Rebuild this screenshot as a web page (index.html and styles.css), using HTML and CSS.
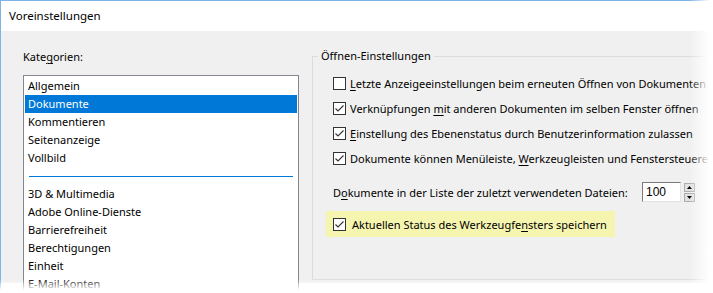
FILE: index.html
```html
<!DOCTYPE html>
<html lang="de">
<head>
    <meta charset="UTF-8">
    <title>Voreinstellungen</title>
    <link rel="stylesheet" href="styles.css">
</head>
<body>
    <div class="window">
        <div class="titlebar">Voreinstellungen</div>

        <div class="content">
            <div class="categories">
                <div class="cat-label">Kate<u>g</u>orien:</div>
                <ul class="listbox">
                    <li>Allgemein</li>
                    <li class="selected">Dokumente</li>
                    <li>Kommentieren</li>
                    <li>Seitenanzeige</li>
                    <li>Vollbild</li>
                    <li class="separator"><span></span></li>
                    <li>3D &amp; Multimedia</li>
                    <li>Adobe Online-Dienste</li>
                    <li>Barrierefreiheit</li>
                    <li>Berechtigungen</li>
                    <li>Einheit</li>
                    <li>E-Mail-Konten</li>
                </ul>
            </div>

            <fieldset class="group">
                <legend>Öffnen-Einstellungen</legend>

                <div class="check-row">
                    <span class="checkbox"></span>
                    <span><u>L</u>etzte Anzeigeeinstellungen beim erneuten Öffnen von Dokumenten</span>
                </div>
                <div class="check-row">
                    <span class="checkbox checked"><svg viewBox="0 0 11 11"><polyline points="1.5,5.5 4,8 9.5,2.5"/></svg></span>
                    <span>Verknüpfungen <u>m</u>it anderen Dokumenten im selben Fenster öffnen</span>
                </div>
                <div class="check-row">
                    <span class="checkbox checked"><svg viewBox="0 0 11 11"><polyline points="1.5,5.5 4,8 9.5,2.5"/></svg></span>
                    <span><u>E</u>instellung des Ebenenstatus durch Benutzerinformation zulassen</span>
                </div>
                <div class="check-row">
                    <span class="checkbox checked"><svg viewBox="0 0 11 11"><polyline points="1.5,5.5 4,8 9.5,2.5"/></svg></span>
                    <span>Dokumente können Menüleiste, <u>W</u>erkzeugleisten und Fenstersteuere</span>
                </div>

                <div class="spin-row">
                    <span class="spin-label">D<u>o</u>kumente in der Liste der zuletzt verwendeten Dateien:</span>
                    <span class="spin-input">100</span>
                    <span class="spin-buttons">
                        <span class="spin-btn"><svg viewBox="0 0 7 4"><polygon points="3.5,0 7,4 0,4"/></svg></span>
                        <span class="spin-btn"><svg viewBox="0 0 7 4"><polygon points="0,0 7,0 3.5,4"/></svg></span>
                    </span>
                </div>

                <div class="check-row highlight">
                    <span class="checkbox checked"><svg viewBox="0 0 11 11"><polyline points="1.5,5.5 4,8 9.5,2.5"/></svg></span>
                    <span>Aktuellen Status des Werkzeugfe<u>n</u>sters speichern</span>
                </div>
            </fieldset>
        </div>
    </div>

    <div class="fade-right"></div>
    <div class="fade-bottom"></div>
</body>
</html>
```

FILE: styles.css
```css
body { margin: 0; width: 713px; height: 293px; overflow: hidden; background: #fff; position: relative; font-family: "Noto Sans", sans-serif; font-size: 11px; color: #000; }
u { text-decoration-thickness: 1px; text-underline-offset: 2px; }

.window { border-top: 1px solid #7eb4ea; border-left: 1px solid #7eb4ea; height: 292px; }
.titlebar { height: 30px; line-height: 30px; padding-left: 8px; background: #fff; font-size: 11.5px; }
.content { display: flex; background: #f0f0f0; height: 252px; padding: 0 0 0 22px; }

.categories { width: 276px; flex: none; }
.cat-label { height: 44px; line-height: 16px; padding-top: 18px; box-sizing: border-box; }
.listbox { list-style: none; margin: 0; padding: 1px; background: #fff; border: 1px solid #828790; border-bottom: none; height: 230px; box-sizing: border-box; }
.listbox li { height: 18px; line-height: 18px; padding-left: 3px; white-space: nowrap; }
.listbox li.selected { background: #0078d7; color: #fff; }
.listbox li.separator { padding: 0 4px; display: flex; align-items: center; }
.listbox li.separator span { display: block; flex: 1; height: 1px; background: #0078d7; }

.group { flex: none; width: 420px; margin: 18px 0 0 13px; padding: 8px 0 0 20px; border: 1px solid #dcdcdc; border-right: none; height: 221px; overflow: hidden; }
.group legend { margin-left: -15px; padding: 0 3px; line-height: 14px; }

.check-row { display: flex; align-items: center; height: 25px; gap: 4px; white-space: nowrap; }
.checkbox { width: 11px; height: 11px; border: 1px solid #333; background: #fff; flex: none; display: flex; }
.checkbox svg { width: 11px; height: 11px; fill: none; stroke: #333; stroke-width: 1.1; }

.spin-row { display: flex; align-items: center; margin-top: 10px; height: 22px; white-space: nowrap; }
.spin-label { width: 309px; }
.spin-input { width: 34px; height: 18px; line-height: 18px; padding-left: 3px; background: #fff; border: 1px solid #e3e3e3; border-top-color: #7a7a7a; border-left-color: #7a7a7a; font-family: "Liberation Sans", sans-serif; font-size: 12px; }
.spin-buttons { display: flex; flex-direction: column; gap: 1px; margin-left: 3px; }
.spin-btn { width: 11px; height: 9px; background: #e1e1e1; border: 1px solid #adadad; display: flex; align-items: center; justify-content: center; box-sizing: border-box; }
.spin-btn svg { width: 5px; height: 3px; fill: #000; }

.highlight { background: #f5f5b0; width: 282px; height: 26px; margin: 8px 0 0 -7px; padding-left: 7px; gap: 6px; }

.fade-right { position: absolute; top: 0; right: 0; width: 24px; height: 293px; background: linear-gradient(to right, rgba(255,255,255,0), #fff 85%); }
.fade-bottom { position: absolute; left: 0; bottom: 0; width: 713px; height: 14px; background: linear-gradient(to bottom, rgba(255,255,255,0), #fff 80%); }
```
